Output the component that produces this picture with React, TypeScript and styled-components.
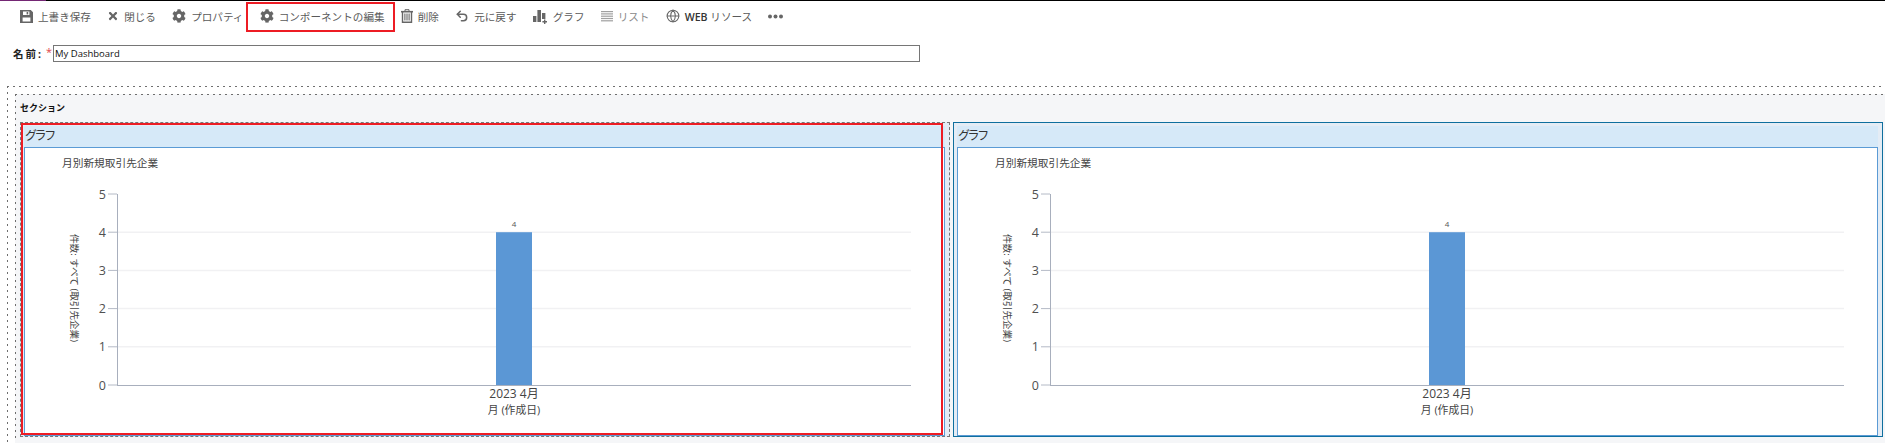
import styled, { createGlobalStyle } from "styled-components";
import type { ReactNode } from "react";
import { FaCog, FaTimes } from "react-icons/fa";
import { Globe, Undo2 } from "lucide-react";

const GlobalStyle = createGlobalStyle`
  html, body {
    margin: 0;
    padding: 0;
    background: #ffffff;
    overflow: hidden;
  }
  body {
    font-family: "Open Sans", "Noto Sans CJK JP", sans-serif;
  }
`;

const Page = styled.div`
  position: relative;
  width: 1885px;
  height: 443px;
  overflow: hidden;
  background: #ffffff;
`;

const TopLine = styled.div`
  height: 1px;
  background: linear-gradient(to right, #742774 46px, #000000 46px);
`;

const Toolbar = styled.div`
  display: flex;
  align-items: center;
  gap: 16.2px;
  height: 30px;
  padding-left: 20px;
`;

const ToolItem = styled.div<{ $muted?: boolean }>`
  display: flex;
  align-items: center;
  gap: 5px;
  font-size: 10.6px;
  white-space: nowrap;
  color: ${(p) => (p.$muted ? "#8a8a8a" : "#5a5a5a")};
  svg {
    display: block;
    flex: none;
    color: ${(p) => (p.$muted ? "#a0a0a0" : "#666666")};
  }
`;

const WebLabel = styled.span`
  color: #333333;
  font-weight: 600;
`;

// red annotation drawn on top of the screenshot
const ToolHighlight = styled.div`
  position: absolute;
  left: 246px;
  top: 2px;
  width: 149px;
  height: 30px;
  box-sizing: border-box;
  border: 2px solid #ed1c24;
`;

const NameRow = styled.div`
  display: flex;
  align-items: center;
  height: 17px;
  margin-top: 14px;
  padding-left: 13px;
`;

const NameLabel = styled.label`
  width: 33px;
  font-size: 10.5px;
  font-weight: 700;
  letter-spacing: 2px;
  color: #222222;
`;

const Required = styled.span`
  width: 7px;
  margin-top: -4px;
  font-size: 11px;
  color: #e0454a;
`;

const NameInput = styled.div`
  box-sizing: border-box;
  width: 867px;
  height: 17px;
  padding-left: 1px;
  border: 1px solid #767676;
  font-size: 9.5px;
  line-height: 15px;
  color: #111111;
`;

const dashH = "repeating-linear-gradient(to right, #6e6e6e 0 2px, transparent 2px 6px)";
const dashV = "repeating-linear-gradient(to bottom, #6e6e6e 0 2px, transparent 2px 6px)";

const Layout = styled.div`
  margin: 24px 0 0 7px;
  padding: 8px 0 0 8px;
  height: 400px;
  background-image: ${dashH}, ${dashV};
  background-size: 100% 1px, 1px 100%;
  background-repeat: no-repeat;
`;

const Section = styled.div`
  height: 349px;
  padding: 0 0 0 5px;
  background-color: #f5f6f8;
  background-image: ${dashH}, ${dashV};
  background-size: 100% 1px, 1px 346px;
  background-repeat: no-repeat;
`;

const SectionTitle = styled.div`
  height: 28px;
  font-size: 9px;
  font-weight: 700;
  line-height: 28px;
  color: #111111;
`;

const Columns = styled.div`
  display: grid;
  grid-template-columns: 930px 930px;
  column-gap: 3px;
`;

const Cell = styled.div<{ $selected?: boolean }>`
  box-sizing: border-box;
  height: 315px;
  padding: 3px 4px 0 3px;
  background: #e4ecf5;
  border: ${(p) => (p.$selected ? "1px solid #0f6f9e" : "1px dashed #777777")};
`;

const CellHeader = styled.div`
  box-sizing: border-box;
  height: 21px;
  padding-left: 1px;
  background: #d6e9f8;
  font-size: 12px;
  letter-spacing: -2.4px;
  line-height: 20px;
  color: #333333;
`;

const ChartFrame = styled.div`
  box-sizing: border-box;
  height: 289px;
  background: #ffffff;
  border: 1px solid #5b9bd5;
  svg {
    display: block;
  }
`;

const CellHighlight = styled.div`
  position: absolute;
  left: 21px;
  top: 123px;
  width: 922px;
  height: 312px;
  box-sizing: border-box;
  border: 2px solid #ed1c24;
`;

const SaveIcon = () => (
  <svg width="13" height="13" viewBox="0 0 13 13" fill="currentColor">
    <path
      fillRule="evenodd"
      d="M0 0h10.8L13 2.2V13H0zM3 1.6V5h6.4V1.6zM2.6 7.4v4h7.8v-4z"
    />
    <rect x="6.6" y="2" width="1.6" height="2.4" />
  </svg>
);
const CloseIcon = () => <FaTimes size={12} />;
const GearIcon = () => <FaCog size={14} />;

const TrashIcon = () => (
  <svg width="12" height="14" viewBox="0 0 12 14" fill="none" stroke="currentColor">
    <path d="M0 2.7h12" strokeWidth="1.6" />
    <path d="M4 2V.7h4V2" strokeWidth="1" />
    <path d="M1.5 3v10.2h9V3" strokeWidth="1.4" />
    <path d="M3.9 4.5v7M6 4.5v7M8.1 4.5v7" strokeWidth="1.1" />
  </svg>
);

const ChartIcon = () => (
  <svg width="15" height="15" viewBox="0 0 15 15" fill="currentColor">
    <rect x="0" y="7" width="3.4" height="6" />
    <rect x="4.4" y="1" width="3.6" height="12" />
    <rect x="9" y="4" width="3.4" height="6" />
    <path d="M11 10.5h1.4v1.6H14v1.4h-1.6V15H11v-1.5H9.4v-1.4H11z" />
  </svg>
);

const ListIcon = () => (
  <svg width="12" height="11" viewBox="0 0 12 11" fill="currentColor">
    {[0, 2.3, 4.6, 6.9, 9.2].map((y) => (
      <rect key={y} x="0" y={y} width="12" height="1.2" />
    ))}
  </svg>
);

const DotsIcon = () => (
  <svg width="15" height="5" viewBox="0 0 15 5" fill="currentColor">
    <circle cx="2" cy="2.5" r="2" />
    <circle cx="7.5" cy="2.5" r="2" />
    <circle cx="13" cy="2.5" r="2" />
  </svg>
);

const Tool = ({ icon, muted, children }: { icon: ReactNode; muted?: boolean; children?: ReactNode }) => (
  <ToolItem $muted={muted}>
    {icon}
    {children && <span>{children}</span>}
  </ToolItem>
);

const ticks = [5, 4, 3, 2, 1, 0];

// one chart; coordinates are relative to the inside of the frame
function BarChart({ width }: { width: number }) {
  const axisX = 92;
  const axisEnd = axisX + 794;
  const base = 237;
  const step = 38.2;
  const barX = axisX + 379;
  const center = barX + 18;
  return (
    <svg width={width} height={287} viewBox={`0 0 ${width} 287`} fontFamily='"Open Sans", "Noto Sans CJK JP", sans-serif'>
      <text x={37} y={19} fontSize={10.7} fill="#444444">月別新規取引先企業</text>
      {ticks.map((t) => {
        const y = base - t * step;
        return (
          <g key={t}>
            {t > 0 && t < 5 && <line x1={axisX} x2={axisEnd} y1={y} y2={y} stroke="#f1f1f3" strokeWidth={1.5} />}
            <line x1={axisX - 9} x2={axisX} y1={y} y2={y} stroke="#b4bac6" />
            <text x={axisX - 11} y={y + 4.5} fontSize={12.5} textAnchor="end" fill="#505050">{t}</text>
          </g>
        );
      })}
      <line x1={axisX + 0.5} x2={axisX + 0.5} y1={base - 5 * step} y2={base} stroke="#a8afbd" />
      <rect x={barX} y={base - 4 * step} width={36} height={4 * step} fill="#5b97d5" />
      <line x1={axisX} x2={axisEnd} y1={base + 0.5} y2={base + 0.5} stroke="#a8afbd" />
      <text x={center} y={base - 4 * step - 5} fontSize={8} textAnchor="middle" fill="#555555">4</text>
      <text x={center} y={base + 13} fontSize={12} textAnchor="middle" fill="#444444">2023  4月</text>
      <text x={center} y={base + 29} fontSize={10.8} textAnchor="middle" fill="#444444">月 (作成日)</text>
      <text
        transform={`translate(46 ${base - 97}) rotate(90)`}
        fontSize={9.6}
        textAnchor="middle"
        fill="#444444"
      >
        件数: すべて (取引先企業)
      </text>
    </svg>
  );
}

export default function App() {
  return (
    <Page>
      <GlobalStyle />
      <TopLine />
      <Toolbar>
        <Tool icon={<SaveIcon />}>上書き保存</Tool>
        <Tool icon={<CloseIcon />}>閉じる</Tool>
        <Tool icon={<GearIcon />}>プロパティ</Tool>
        <Tool icon={<GearIcon />}>コンポーネントの編集</Tool>
        <Tool icon={<TrashIcon />}>削除</Tool>
        <Tool icon={<Undo2 size={14} strokeWidth={2.6} />}>元に戻す</Tool>
        <Tool icon={<ChartIcon />}>グラフ</Tool>
        <Tool icon={<ListIcon />} muted>リスト</Tool>
        <Tool icon={<Globe size={14} strokeWidth={1.8} />}><WebLabel>WEB</WebLabel> リソース</Tool>
        <Tool icon={<DotsIcon />} />
      </Toolbar>
      <ToolHighlight />
      <NameRow>
        <NameLabel>名前:</NameLabel>
        <Required>*</Required>
        <NameInput>My Dashboard</NameInput>
      </NameRow>
      <Layout>
        <Section>
          <SectionTitle>セクション</SectionTitle>
          <Columns>
            <Cell>
              <CellHeader>グラフ</CellHeader>
              <ChartFrame><BarChart width={920} /></ChartFrame>
            </Cell>
            <Cell $selected>
              <CellHeader>グラフ</CellHeader>
              <ChartFrame><BarChart width={920} /></ChartFrame>
            </Cell>
          </Columns>
        </Section>
      </Layout>
      <CellHighlight />
    </Page>
  );
}
